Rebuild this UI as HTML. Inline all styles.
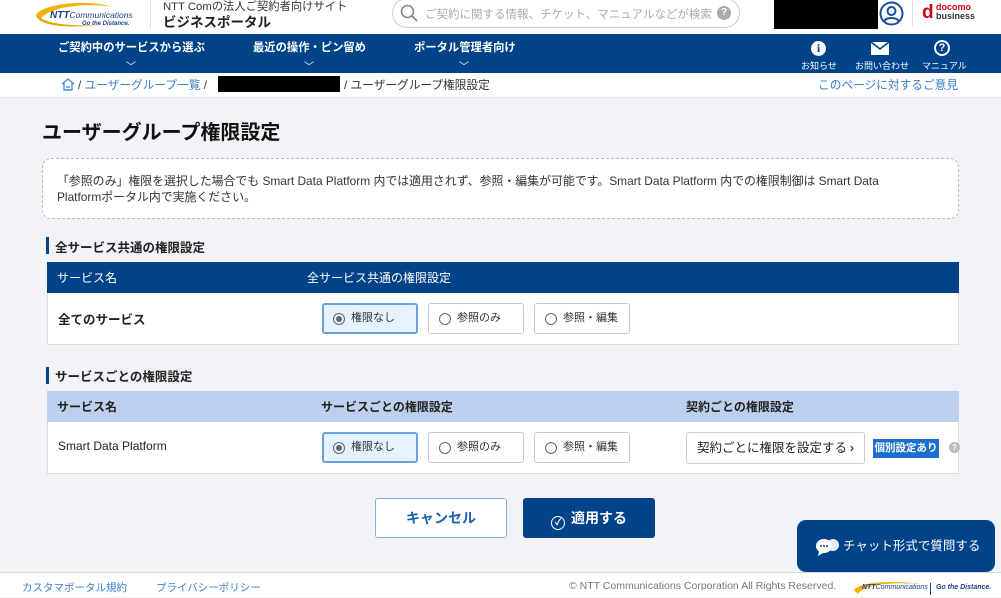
<!DOCTYPE html>
<html><head><meta charset="utf-8"><style>
*{box-sizing:border-box;margin:0;padding:0}
body{width:1001px;height:597px;overflow:hidden;background:#f2f3f7;font-family:"Liberation Sans","Noto Sans CJK JP",sans-serif;color:#222;position:relative}
.abs{position:absolute}
.hdr{left:0;top:0;width:1001px;height:34px;background:#fff}
.nav{left:0;top:34px;width:1001px;height:39px;background:#004388;color:#fff}
.bc{left:0;top:73px;width:1001px;height:25px;background:#fff;border-bottom:1px solid #e3e4e8;font-size:11.7px}
.radio{position:absolute;height:31px;border:1px solid #c8c8c8;border-radius:3px;background:#fff;font-size:11px;color:#333;padding-left:28px;line-height:28px}
.radio:before{content:"";position:absolute;left:10px;top:9px;width:10px;height:10px;border:1px solid #666;border-radius:50%}
.radio.on{background:#e6f2ff;border:2px solid #6aa3dc;line-height:26px;padding-left:27px}
.radio.on:before{left:9px;top:8px}
.radio.on:after{content:"";position:absolute;left:12px;top:11px;width:6px;height:6px;background:#666;border-radius:50%}
</style></head><body>
<div class="abs hdr">
 <svg class="abs" style="left:32px;top:1px" width="110" height="30" viewBox="0 0 110 30"><path d="M4 14 C10 2 60 -2 80 6 C60 2 20 4 8 18 Z" fill="#f0b400"/><path d="M4 14 C6 24 30 28 70 24 C40 26 12 22 8 16Z" fill="#e8a800"/></svg>
 <div class="abs" style="left:50px;top:10px;font-size:10px;font-weight:bold;font-style:italic;color:#1a3f8f">NTT<span style="font-size:8.5px;font-weight:normal">Communications</span></div>
 <div class="abs" style="left:82px;top:21px;font-size:6px;font-weight:bold;font-style:italic;color:#1a3f8f">Go the Distance.</div>
 <div class="abs" style="left:150px;top:2px;width:1px;height:26px;background:#ddd"></div>
 <div class="abs" style="left:163px;top:-2px;font-size:11.3px;color:#333">NTT Comの法人ご契約者向けサイト</div>
 <div class="abs" style="left:163px;top:11px;font-size:13.5px;font-weight:bold;color:#222">ビジネスポータル</div>
 <div class="abs" style="left:392px;top:-2px;width:348px;height:30px;border:1px solid #ccc;border-radius:15px;background:#fff"></div>
 <svg class="abs" style="left:400px;top:4px" width="18" height="18" viewBox="0 0 18 18"><circle cx="7.5" cy="7.5" r="6" fill="none" stroke="#888" stroke-width="1.6"/><path d="M12 12l5 5" stroke="#888" stroke-width="1.8"/></svg>
 <div class="abs" style="left:425px;top:6px;font-size:11.5px;color:#aaa">ご契約に関する情報、チケット、マニュアルなどが検索</div>
 <div class="abs" style="left:717px;top:6px;width:14px;height:14px;border-radius:50%;background:#aaa;color:#fff;font-size:10px;font-weight:bold;text-align:center;line-height:14px">?</div>
 <div class="abs" style="left:774px;top:0;width:104px;height:29px;background:#000"></div>
 <svg class="abs" style="left:879px;top:1px" width="25" height="25" viewBox="0 0 25 25"><circle cx="12.5" cy="12.5" r="11" fill="none" stroke="#1a4fa0" stroke-width="2"/><circle cx="12.5" cy="10" r="4" fill="none" stroke="#1a4fa0" stroke-width="2"/><path d="M5.5 20c2-4 12-4 14 0" fill="none" stroke="#1a4fa0" stroke-width="2"/></svg>
 <div class="abs" style="left:912px;top:1px;width:1px;height:26px;background:#ddd"></div>
 <div class="abs" style="left:922px;top:2px;font-size:19px;font-weight:bold;color:#d0021b;line-height:22px">d</div>
 <div class="abs" style="left:936px;top:3px;font-size:9px;font-weight:bold;color:#d0021b;line-height:9px">docomo<br><span style="color:#333">business</span></div>
</div>
<div class="abs nav">
 <div class="abs" style="left:58px;top:5px;font-size:11.3px;font-weight:bold">ご契約中のサービスから選ぶ</div>
 <div class="abs" style="left:253px;top:5px;font-size:11.3px;font-weight:bold">最近の操作・ピン留め</div>
 <div class="abs" style="left:414px;top:5px;font-size:11.3px;font-weight:bold">ポータル管理者向け</div>
 <div class="abs" style="left:126px;top:24px;font-size:10px">﹀</div>
 <div class="abs" style="left:304px;top:24px;font-size:10px">﹀</div>
 <div class="abs" style="left:459px;top:24px;font-size:10px">﹀</div>
 <div class="abs" style="left:811px;top:7px;width:15px;height:15px;border-radius:50%;background:#fff;color:#004388;font-weight:bold;font-size:12px;text-align:center;line-height:15px;font-family:'Liberation Serif',serif">i</div>
 <svg class="abs" style="left:871px;top:8px" width="18" height="13"><rect width="18" height="13" fill="#fff"/><path d="M0 0l9 7 9-7" fill="none" stroke="#004388" stroke-width="1.6"/></svg>
 <div class="abs" style="left:934px;top:6px;width:16px;height:16px;border-radius:50%;border:2px solid #fff;font-size:11px;font-weight:bold;text-align:center;line-height:13px">?</div>
 <div class="abs" style="left:801px;top:25px;font-size:9px">お知らせ</div>
 <div class="abs" style="left:855px;top:25px;font-size:9px">お問い合わせ</div>
 <div class="abs" style="left:922px;top:25px;font-size:9px">マニュアル</div>
</div>
<div class="abs bc">
 <svg class="abs" style="left:61px;top:5px" width="14" height="13" viewBox="0 0 14 13"><path d="M1 6L7 1l6 5M3 5v7h8V5" fill="none" stroke="#4a8bd0" stroke-width="1.4"/><path d="M5 9h4" stroke="#4a8bd0" stroke-width="1.4"/></svg>
 <div class="abs" style="left:78px;top:3px;color:#333">/ <span style="color:#3a7fc8">ユーザーグループ一覧</span> /</div>
 <div class="abs" style="left:218px;top:3px;width:122px;height:16px;background:#000"></div>
 <div class="abs" style="left:344px;top:3px;color:#333">/ ユーザーグループ権限設定</div>
 <div class="abs" style="left:818px;top:3px;color:#3a7fc8">このページに対するご意見</div>
</div>
<div class="abs" style="left:42px;top:116px;font-size:20px;font-weight:bold;color:#111">ユーザーグループ権限設定</div>
<div class="abs" style="left:42px;top:158px;width:917px;height:61px;background:#fff;border:1px dashed #bbb;border-radius:9px;font-size:11.9px;color:#333;padding:14px 0 0 14px;line-height:16px">「参照のみ」権限を選択した場合でも Smart Data Platform 内では適用されず、参照・編集が可能です。Smart Data Platform 内での権限制御は Smart Data<br>Platformポータル内で実施ください。</div>
<div class="abs" style="left:46px;top:237px;width:3px;height:17px;background:#004388"></div>
<div class="abs" style="left:55px;top:237px;font-size:12.5px;font-weight:bold">全サービス共通の権限設定</div>
<div class="abs" style="left:47px;top:262px;width:912px;height:31px;background:#004388;color:#fff;font-size:12px">
 <span class="abs" style="left:10px;top:7px">サービス名</span><span class="abs" style="left:260px;top:7px">全サービス共通の権限設定</span></div>
<div class="abs" style="left:47px;top:293px;width:912px;height:52px;background:#fff;border:1px solid #ddd;border-top:0">
 <span class="abs" style="left:10px;top:16px;font-size:12.5px;font-weight:bold">全てのサービス</span>
 <div class="radio on" style="left:274px;top:10px;width:96px">権限なし</div>
 <div class="radio" style="left:380px;top:10px;width:96px">参照のみ</div>
 <div class="radio" style="left:486px;top:10px;width:96px">参照・編集</div>
</div>
<div class="abs" style="left:46px;top:367px;width:3px;height:17px;background:#004388"></div>
<div class="abs" style="left:55px;top:366px;font-size:12.5px;font-weight:bold">サービスごとの権限設定</div>
<div class="abs" style="left:47px;top:391px;width:912px;height:31px;background:#bdd0ee;color:#222;font-size:12px;font-weight:bold">
 <span class="abs" style="left:10px;top:7px">サービス名</span><span class="abs" style="left:274px;top:7px">サービスごとの権限設定</span><span class="abs" style="left:639px;top:7px">契約ごとの権限設定</span></div>
<div class="abs" style="left:47px;top:422px;width:912px;height:52px;background:#fff;border:1px solid #ddd;border-top:0">
 <span class="abs" style="left:10px;top:17px;font-size:12px">Smart Data Platform</span>
 <div class="radio on" style="left:274px;top:10px;width:96px">権限なし</div>
 <div class="radio" style="left:380px;top:10px;width:96px">参照のみ</div>
 <div class="radio" style="left:486px;top:10px;width:96px">参照・編集</div>
 <div class="abs" style="left:638px;top:10px;width:179px;height:32px;border:1px solid #ccc;border-radius:3px;font-size:12.5px;line-height:30px;padding-left:10px;color:#222">契約ごとに権限を設定する<span style="position:absolute;right:10px;font-weight:bold;color:#444">›</span></div>
 <div class="abs" style="left:825px;top:17px;width:66px;height:19px;background:#1a6fd0;color:#fff;font-size:10.5px;font-weight:bold;text-align:center;line-height:19px">個別設定あり</div>
 <div class="abs" style="left:901px;top:20px;width:11px;height:11px;border-radius:50%;background:#bbb;color:#fff;font-size:8px;text-align:center;line-height:11px;font-weight:bold">?</div>
</div>
<div class="abs" style="left:375px;top:498px;width:132px;height:40px;background:#fff;border:1px solid #7fb2e5;border-radius:3px;color:#1a5fb0;font-size:14px;font-weight:bold;text-align:center;line-height:38px">キャンセル</div>
<div class="abs" style="left:523px;top:498px;width:132px;height:40px;background:#004388;border-radius:3px;color:#fff;font-size:14px;font-weight:bold;text-align:center;line-height:40px"><span style="display:inline-block;width:14px;height:14px;border:1.5px solid #fff;border-radius:50%;vertical-align:-2px;margin-right:6px;font-size:9px;line-height:11px">✓</span>適用する</div>
<div class="abs" style="left:797px;top:520px;width:198px;height:52px;background:#004388;border-radius:9px;color:#fff;font-size:12.5px;line-height:52px;padding-left:46px">チャット形式で質問する</div>
<svg class="abs" style="left:815px;top:537px" width="26" height="20" viewBox="0 0 26 20"><ellipse cx="9" cy="9" rx="8" ry="7" fill="#fff"/><path d="M4 14l-1 5 5-3z" fill="#fff"/><ellipse cx="18" cy="8" rx="6" ry="6" fill="#fff" opacity=".9"/><circle cx="6" cy="9" r="1" fill="#004388"/><circle cx="9" cy="9" r="1" fill="#004388"/><circle cx="12" cy="9" r="1" fill="#004388"/></svg>
<div class="abs" style="left:0;top:572px;width:1001px;height:25px;background:#fff;border-top:1px solid #ddd;font-size:10.5px">
 <span class="abs" style="left:22px;top:7px;color:#3a7fc8">カスタマポータル規約</span>
 <span class="abs" style="left:156px;top:7px;color:#3a7fc8">プライバシーポリシー</span>
 <span class="abs" style="left:569px;top:7px;color:#777">© NTT Communications Corporation All Rights Reserved.</span>
 <svg class="abs" style="left:852px;top:7px" width="80" height="18"><path d="M2 10C8 2 40 0 70 4C40 2 12 4 6 14Z" fill="#f0b400"/></svg>
 <span class="abs" style="left:862px;top:11px;font-size:7px;font-weight:bold;font-style:italic;color:#1a3f8f">NTT<span style="font-weight:normal">Communications</span></span>
 <span class="abs" style="left:930px;top:10px;width:1px;height:12px;background:#1a3f8f"></span>
 <span class="abs" style="left:936px;top:11px;font-size:7px;font-weight:bold;font-style:italic;color:#1a3f8f">Go the Distance.</span>
</div>
</body></html>
